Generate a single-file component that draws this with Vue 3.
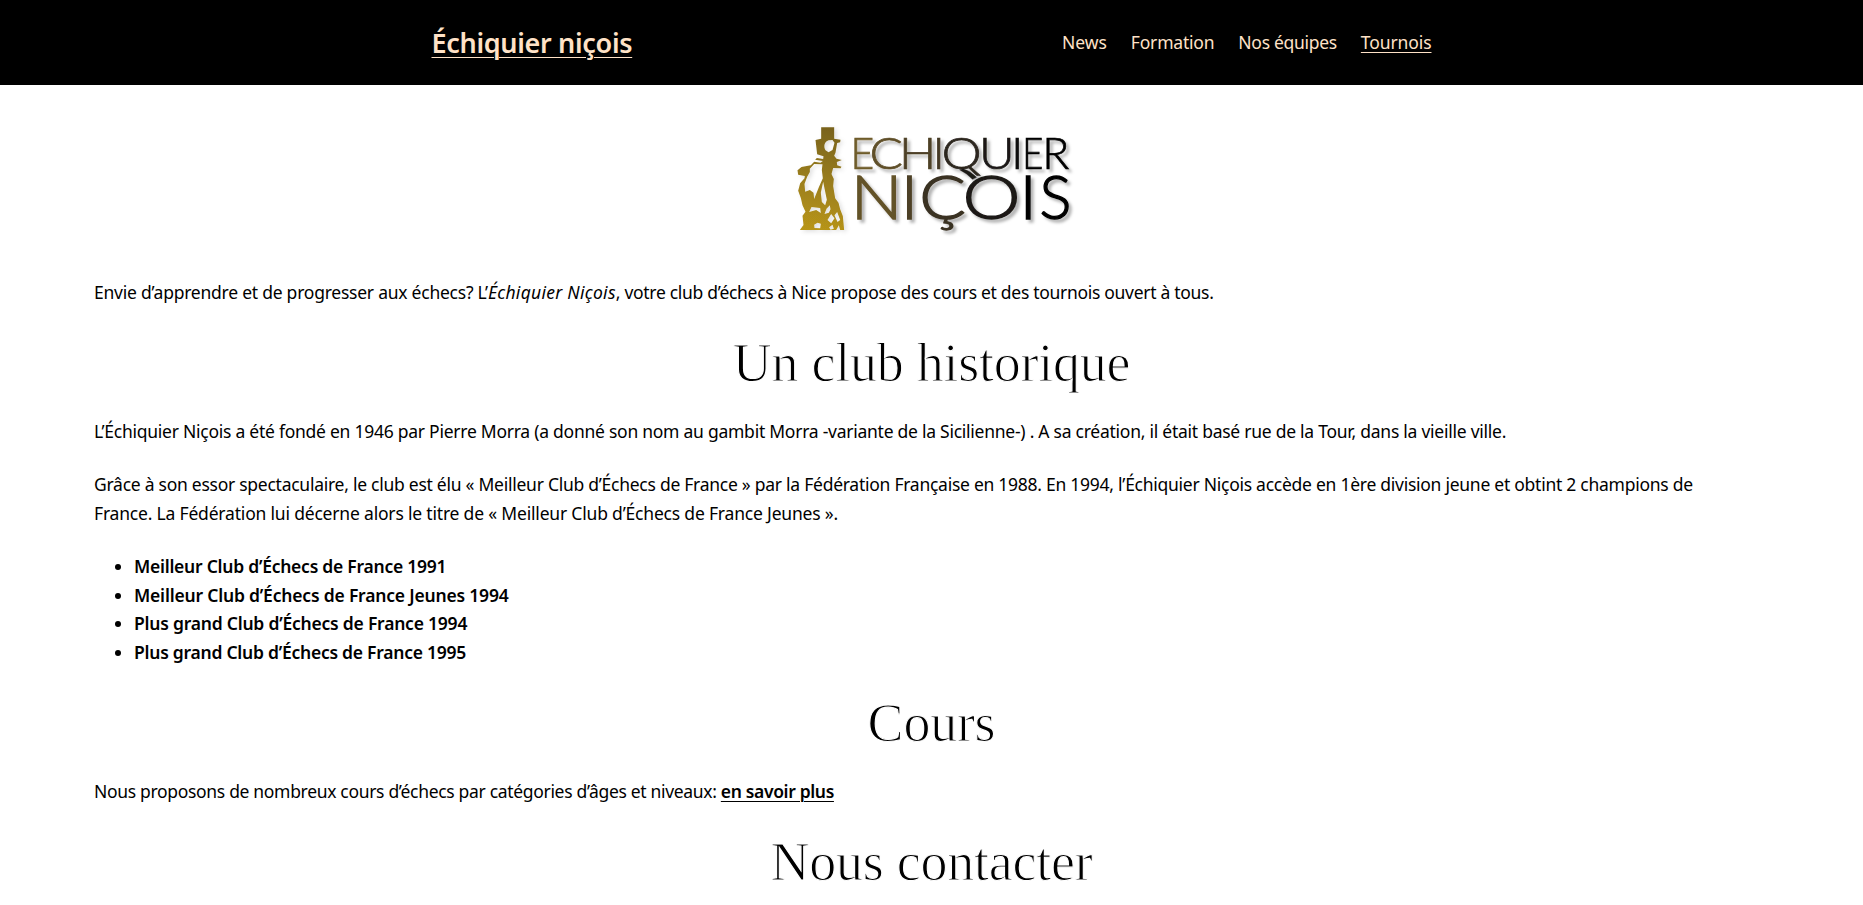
<script setup>
const nav = ['News', 'Formation', 'Nos équipes', 'Tournois']
const titles = [
  { text: 'Meilleur Club d’Échecs de France 1991', cls: 't1' },
  { text: 'Meilleur Club d’Échecs de France Jeunes 1994', cls: 't2' },
  { text: 'Plus grand Club d’Échecs de France 1994', cls: 't3' },
  { text: 'Plus grand Club d’Échecs de France 1995', cls: 't4' },
]

// Side bearing and ink width of each capital, in em
const metrics = {
  E: [0.09, 0.44], C: [0.046, 0.58], Ç: [0.046, 0.58], H: [0.09, 0.56], I: [0.1, 0.07],
  Q: [0.045, 0.71], U: [0.08, 0.57], R: [0.09, 0.51], N: [0.09, 0.56], O: [0.045, 0.7], S: [0.04, 0.47],
}
const row = (size, y, items) => items.map(([ch, x0, x1]) => {
  const [lsb, ink] = metrics[ch]
  const s = (x1 - x0) / (ink * size)
  return { ch, size, tf: `translate(${(x0 - lsb * size * s).toFixed(1)} ${y}) scale(${s.toFixed(3)} 1)` }
})
const upper = row(132, 176, [['E', 221, 275], ['C', 274, 360], ['H', 369, 452], ['I', 470, 480], ['Q', 490, 598], ['U', 607, 691], ['I', 706, 716], ['E', 735, 783], ['R', 797, 865]])
const lower = row(182, 327, [['N', 229, 344], ['I', 381, 395], ['Ç', 426, 546], ['O', 556, 710], ['I', 737, 751], ['S', 784, 868]])
</script>

<template>
  <div class="page">
    <header class="header">
      <div class="bar">
        <a class="brand">Échiquier niçois</a>
        <nav class="nav">
          <a v-for="(n, i) in nav" :key="n" :class="['n' + i, { current: n === 'Tournois' }]">{{ n }}</a>
        </nav>
      </div>
    </header>
    <main class="content">
      <svg class="logo" viewBox="4.5 0 900 420" role="img" aria-label="Echiquier Niçois">
        <defs>
          <linearGradient id="gold" gradientUnits="userSpaceOnUse" x1="150" y1="50" x2="90" y2="365">
            <stop offset="0" stop-color="#78621d" />
            <stop offset="1" stop-color="#b99619" />
          </linearGradient>
          <filter id="shade" x="-10%" y="-10%" width="125%" height="125%">
            <feDropShadow dx="9" dy="9" stdDeviation="5" flood-color="#000" flood-opacity=".3" />
          </filter>
          <filter id="soft" x="-10%" y="-10%" width="125%" height="125%">
            <feDropShadow dx="7" dy="5" stdDeviation="6" flood-color="#000" flood-opacity=".12" />
          </filter>
        </defs>
        <path filter="url(#soft)" fill="url(#gold)" fill-rule="evenodd" d="M122 52H161V86L180 89 179 97 170 99 165 128 161 137 168 146 184 150 169 156 170 166 183 170 180 175 158 174 153 192 160 207 158 228 164 265 174 278 179 298 187 318 191 360H179L175 346 167 360H58L69 345 66 317 75 305 66 286 61 264 53 242 59 220 72 205 73 198 53 194 51 181 63 171 91 166 101 155 120 158 127 153 104 149 109 144 128 147 129 139 110 133 105 90 122 86ZM144 91C132 95 128 110 135 121L144 127 156 120 162 98 156 90ZM101 162L88 176 88 186 80 200 72 222 74 245 88 240 99 248 101 267 115 232 127 205 124 180 126 163ZM128 215L121 248 124 276 134 286 139 269ZM93 291L86 306 107 300 121 309 119 294ZM138 296L132 312 145 308 150 298 148 286ZM152 312L141 330 152 340 162 325ZM111 338L101 344 102 354 119 355 121 341ZM170 306L162 316 171 336 179 330ZM156 344L146 352 150 359 160 356Z" />
        <g class="lettering" filter="url(#shade)">
          <text v-for="(g, i) in upper" :key="'u' + i" :class="['u' + i, 'thin']" :font-size="g.size" :transform="g.tf">{{ g.ch }}</text>
          <text v-for="(g, i) in lower" :key="'l' + i" :class="['l' + i, 'stem']" :font-size="g.size" :transform="g.tf">{{ g.ch }}</text>
          <path class="l3" d="M548 176Q570 183 588 202L576 208Q560 190 537 179Z" />
        </g>
      </svg>
      <p><span class="p1a">Envie d’apprendre et de progresser aux échecs? L’</span><em>Échiquier Niçois</em><span class="p1b">, votre club d’échecs à Nice propose des cours et des tournois ouvert à tous.</span></p>
      <h2>Un club historique</h2>
      <p class="p2">L’Échiquier Niçois a été fondé en 1946 par Pierre Morra (a donné son nom au gambit Morra -variante de la Sicilienne-) . A sa création, il était basé rue de la Tour, dans la vieille ville.</p>
      <p><span class="p3">Grâce à son essor spectaculaire, le club est élu « Meilleur Club d’Échecs de France » par la Fédération Française en 1988. En 1994, l’Échiquier Niçois accède en 1ère division jeune et obtint 2 champions de</span><br><span class="p4">France. La Fédération lui décerne alors le titre de « Meilleur Club d’Échecs de France Jeunes ».</span></p>
      <ul class="titles">
        <li v-for="t in titles" :key="t.text"><strong :class="t.cls">{{ t.text }}</strong></li>
      </ul>
      <h2>Cours</h2>
      <p><span class="p5">Nous proposons de nombreux cours d’échecs par catégories d’âges et niveaux: </span><a class="more">en savoir plus</a></p>
      <h2>Nous contacter</h2>
    </main>
  </div>
</template>

<style>
html, body { margin: 0; overflow: hidden; }
</style>
<style scoped>
.page { height: 905px; overflow: hidden; background: #fff; color: #000; font: 400 17.5px/28.8px "Noto Sans", "Open Sans", sans-serif; white-space: nowrap; }
.header { height: 85px; background: #000; color: #ffe2c7; }
.bar { width: 1000px; height: 100%; margin: 0 auto; display: flex; align-items: center; justify-content: space-between; }
.brand { font-size: 27px; font-weight: 600; letter-spacing: -.32px; padding-top: 2px; text-decoration: underline; text-decoration-thickness: 1px; text-underline-offset: 4px; }
.nav { display: flex; gap: 24px; }
.n1 { letter-spacing: -.2px; }
.n2 { letter-spacing: -.3px; }
.n3 { letter-spacing: -.1px; }
.current { text-decoration: underline; text-decoration-thickness: 1px; text-underline-offset: 3px; }
.content { padding: 25px 94px 0; }
.logo { display: block; width: 300px; height: 140px; margin: 0 auto 27.8px; }
.lettering { font-family: Lato, sans-serif; font-weight: 300; }
.thin { stroke-width: 2.2px; }
.stem { stroke-width: 4px; }
.u0, .u1, .u2, .u3, .u4, .u5, .u6, .u7, .u8, .l0, .l1, .l2, .l3, .l4, .l5 { fill: var(--c); stroke: var(--c); }
.u0 { --c: #6f5c2c; } .u1 { --c: #5f4f29; } .u2 { --c: #4e4127; } .u3 { --c: #443925; }
.u4 { --c: #2d2720; } .u5 { --c: #1b1916; } .u6 { --c: #0e0d0c; } .u7, .u8 { --c: #050505; }
.l0 { --c: #635229; } .l1 { --c: #4d4126; } .l2 { --c: #3a3123; } .l3 { --c: #1d1a17; } .l4, .l5 { --c: #050505; }
p { margin: 0 0 24.2px; }
h2 { margin: 0 0 23.2px; padding-top: .8px; text-align: center; font: 400 54px/62.2px "Liberation Serif", serif; letter-spacing: -.25px; -webkit-text-stroke: 1.1px #fff; }
.titles { margin: 0 0 24px; padding-left: 40px; }
strong, .more { font-weight: 600; }
.more { letter-spacing: -.35px; text-decoration: underline; text-decoration-thickness: 1px; text-underline-offset: 3px; }
em { letter-spacing: .28px; }
.p1a { letter-spacing: -.24px; }
.p1b { letter-spacing: -.3px; }
.p2 { letter-spacing: -.255px; }
.p3 { letter-spacing: -.262px; }
.p4 { letter-spacing: -.19px; }
.p5 { letter-spacing: -.32px; }
.t1, .t4 { letter-spacing: -.25px; }
.t2 { letter-spacing: -.19px; }
.t3 { letter-spacing: -.22px; }
</style>
